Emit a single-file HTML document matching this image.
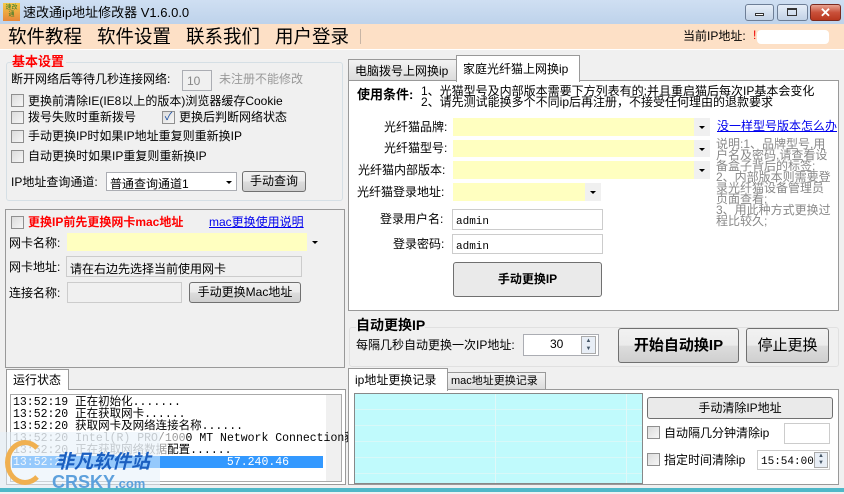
<!DOCTYPE html>
<html><head><meta charset="utf-8"><style>
*{margin:0;padding:0;box-sizing:border-box}
body{width:844px;height:492px;overflow:hidden;background:#f0f0f0;font-family:"Liberation Sans","Noto Sans CJK SC",sans-serif;font-size:12px;color:#000;position:relative}
.a{position:absolute;white-space:nowrap}
.t{position:absolute;white-space:nowrap;line-height:14px}
.box{position:absolute;border:1px solid #abadb3;background:#fff}
.btn{position:absolute;border:1px solid #707070;border-radius:3px;background:linear-gradient(#f2f2f2,#ebebeb 50%,#dddddd 51%,#cfcfcf);text-align:center;white-space:nowrap}
.cb{position:absolute;width:13px;height:13px;border:1px solid #8f8f8f;background:linear-gradient(135deg,#dcdcdc,#f6f6f6)}
.yel{position:absolute;background:#ffffc0}
.arr{position:absolute;background:#f0f0f0}
.arr:after{content:"";position:absolute;left:5px;top:8px;border-left:3px solid transparent;border-right:3px solid transparent;border-top:3px solid #000}
.grp{position:absolute;border:1px solid #d5dfe5;border-radius:3px}
.mono{font-family:"Liberation Mono","Noto Sans CJK SC",monospace}
</style></head><body>
<!-- title bar -->
<div class="a" style="left:0;top:0;width:844px;height:27px;background:linear-gradient(#cfdff2,#bcd1ea)"></div>
<div class="a" style="left:3px;top:3px;width:17px;height:18px;background:linear-gradient(#f4c94a,#e7873a);font-size:6px;color:#2a7a2a;line-height:7px;text-align:center;padding-top:2px">速改<br>通</div>
<div class="t" style="left:23px;top:6px;font-size:13px;">速改通ip地址修改器 V1.6.0.0</div>
<div class="a" style="left:745px;top:4px;width:29px;height:17px;border:1px solid #6d7e96;border-radius:3px;background:linear-gradient(#e6eef8,#c2d2e6)"></div>
<div class="a" style="left:755px;top:13px;width:9px;height:3px;border:1px solid #333;background:#fff"></div>
<div class="a" style="left:777px;top:4px;width:31px;height:17px;border:1px solid #6d7e96;border-radius:3px;background:linear-gradient(#e6eef8,#c2d2e6)"></div>
<div class="a" style="left:787px;top:8px;width:10px;height:8px;border:1px solid #333;border-top-width:2px"></div>
<div class="a" style="left:810px;top:4px;width:31px;height:17px;border:1px solid #7a2a20;border-radius:3px;background:linear-gradient(#e8a493,#c9503a 50%,#b8371f);color:#fff;font-weight:bold;font-size:13px;line-height:15px;text-align:center">✕</div>
<!-- menu bar -->
<div class="a" style="left:0;top:24px;width:844px;height:25px;background:#fde0c6"></div>
<div class="t" style="left:8px;top:26px;font-size:18.5px;line-height:21px">软件教程</div>
<div class="t" style="left:97px;top:26px;font-size:18.5px;line-height:21px">软件设置</div>
<div class="t" style="left:186px;top:26px;font-size:18.5px;line-height:21px">联系我们</div>
<div class="t" style="left:275px;top:26px;font-size:18.5px;line-height:21px">用户登录</div>
<div class="a" style="left:360px;top:29px;width:1px;height:15px;background:#c8b5a5"></div>
<div class="t" style="left:683px;top:29px;">当前IP地址:</div>
<div class="t" style="left:753px;top:28px;color:#e00">!</div>
<div class="a" style="left:757px;top:30px;width:72px;height:14px;background:#fff;border-radius:4px"></div>
<div class="a" style="left:0;top:49px;width:844px;height:1px;background:#fff"></div>
<!-- 基本设置 -->
<div class="grp" style="left:6px;top:62px;width:337px;height:139px"></div>
<div class="t" style="left:12px;top:55px;color:#f00;font-weight:bold;font-size:13px;background:#f0f0f0;padding-right:2px">基本设置</div>
<div class="t" style="left:11px;top:72px;">断开网络后等待几秒连接网络:</div>
<div class="box" style="left:182px;top:70px;width:30px;height:21px;background:#f0f0f0;color:#888;padding:3px 4px">10</div>
<div class="t" style="left:219px;top:72px;color:#999">未注册不能修改</div>
<div class="cb" style="left:11px;top:94px"></div><div class="t" style="left:28px;top:94px">更换前清除IE(IE8以上的版本)浏览器缓存Cookie</div>
<div class="cb" style="left:11px;top:111px"></div><div class="t" style="left:28px;top:110px">拨号失败时重新拨号</div>
<div class="cb" style="left:162px;top:111px;font-size:11px;line-height:11px;color:#1c4fa0;text-align:center">✓</div><div class="t" style="left:179px;top:110px">更换后判断网络状态</div>
<div class="cb" style="left:11px;top:130px"></div><div class="t" style="left:28px;top:129px">手动更换IP时如果IP地址重复则重新换IP</div>
<div class="cb" style="left:11px;top:150px"></div><div class="t" style="left:28px;top:149px">自动更换时如果IP重复则重新换IP</div>
<div class="t" style="left:11px;top:175px">IP地址查询通道:</div>
<div class="box" style="left:106px;top:172px;width:131px;height:19px;padding:2px 3px">普通查询通道1</div>
<div class="a" style="left:226px;top:181px;border-left:3px solid transparent;border-right:3px solid transparent;border-top:3px solid #000"></div>
<div class="btn" style="left:242px;top:171px;width:64px;height:21px;line-height:19px">手动查询</div>
<!-- mac group -->
<div class="a" style="left:5px;top:209px;width:340px;height:159px;border:1px solid #999"></div>
<div class="cb" style="left:11px;top:216px"></div>
<div class="t" style="left:28px;top:215px;color:#f00;font-weight:bold;">更换IP前先更换网卡mac地址</div>
<div class="t" style="left:209px;top:215px;color:#00e;text-decoration:underline">mac更换使用说明</div>
<div class="t" style="left:9px;top:236px">网卡名称:</div>
<div class="yel" style="left:67px;top:233px;width:240px;height:18px"></div>
<div class="arr" style="left:307px;top:233px;width:16px;height:18px"></div>
<div class="t" style="left:9px;top:260px">网卡地址:</div>
<div class="box" style="left:66px;top:256px;width:236px;height:21px;background:#f0f0f0;border-color:#ccc;padding:3px 3px">请在右边先选择当前使用网卡</div>
<div class="t" style="left:9px;top:286px">连接名称:</div>
<div class="box" style="left:67px;top:282px;width:115px;height:21px;background:#f0f0f0;border-color:#ccc"></div>
<div class="btn" style="left:189px;top:282px;width:112px;height:21px;line-height:19px">手动更换Mac地址</div>
<!-- 运行状态 -->
<div class="a" style="left:6px;top:389px;width:340px;height:96px;border:1px solid #999;background:#fff"></div>
<div class="a" style="left:6px;top:369px;width:63px;height:21px;border:1px solid #999;border-bottom:none;background:#fff"></div>
<div class="t" style="left:13px;top:373px">运行状态</div>
<div class="a" style="left:10px;top:394px;width:332px;height:88px;border:1px solid #aaa;background:#fff"></div>
<div class="a" style="left:326px;top:395px;width:15px;height:86px;background:#f0f0f0"></div>
<div class="a" style="left:12px;top:456px;width:311px;height:12px;background:#3399ff"></div>
<div class="mono" style="position:absolute;left:13px;top:397px;line-height:12px;font-size:11.5px;white-space:pre">13:52:19 正在初始化.......
13:52:20 正在获取网卡......
13:52:20 获取网卡及网络连接名称......
<span style="color:#999">13:52:20 Intel(R) PRO/100</span>0 MT Network Connection获取
<span style="color:#999">13:52:20 正在获取网络数据</span>配置......
<span style="color:#fff">13:52:20                       57.240.46</span></div>
<div class="a" style="left:0;top:432px;width:160px;height:60px;background:rgba(230,240,250,.55)"></div>
<div class="t" style="left:55px;top:452px;font-size:19px;line-height:22px;color:#1b5fc0;font-weight:bold;font-style:italic">非凡软件站</div>
<div class="t" style="left:52px;top:472px;font-size:18px;line-height:20px;color:#5da0dc;font-weight:bold">CRSKY<span style="font-size:13px">.com</span></div>
<div class="a" style="left:5px;top:440px;width:40px;height:45px;border:5px solid #f0b050;border-right-color:transparent;border-radius:50%"></div>
<!-- right tabs -->
<div class="a" style="left:348px;top:80px;width:491px;height:231px;border:1px solid #999;background:#fff"></div>
<div class="a" style="left:348px;top:59px;width:109px;height:22px;border:1px solid #999;background:linear-gradient(#f3f3f3,#dcdcdc)"></div>
<div class="t" style="left:355px;top:64px">电脑拨号上网换ip</div>
<div class="a" style="left:456px;top:55px;width:124px;height:27px;border:1px solid #999;border-bottom:none;background:#fff"></div>
<div class="t" style="left:463px;top:62px">家庭光纤猫上网换ip</div>
<div class="t" style="left:357px;top:88px;font-weight:bold;font-size:13px">使用条件:</div>
<div class="t" style="left:421px;top:86px;line-height:11px">1、光猫型号及内部版本需要下方列表有的;并且重启猫后每次IP基本会变化<br>2、请先测试能换多个不同ip后再注册，不接受任何理由的退款要求</div>
<div class="t" style="left:384px;top:120px">光纤猫品牌:</div>
<div class="yel" style="left:453px;top:118px;width:241px;height:18px"></div><div class="arr" style="left:694px;top:118px;width:16px;height:18px"></div>
<div class="t" style="left:384px;top:141px">光纤猫型号:</div>
<div class="yel" style="left:453px;top:140px;width:241px;height:17px"></div><div class="arr" style="left:694px;top:140px;width:16px;height:17px"></div>
<div class="t" style="left:358px;top:163px">光纤猫内部版本:</div>
<div class="yel" style="left:453px;top:161px;width:241px;height:18px"></div><div class="arr" style="left:694px;top:161px;width:16px;height:18px"></div>
<div class="t" style="left:357px;top:185px">光纤猫登录地址:</div>
<div class="yel" style="left:453px;top:183px;width:132px;height:18px"></div><div class="arr" style="left:585px;top:183px;width:16px;height:18px"></div>
<div class="t" style="left:717px;top:119px;color:#00e;text-decoration:underline">没一样型号版本怎么办</div>
<div class="a" style="left:716px;top:139px;width:118px;white-space:normal;line-height:11px;color:#888">说明:1、品牌型号,用户名及密码,请查看设备盒子背后的标签;<br>2、内部版本则需要登录光纤猫设备管理员页面查看;<br>3、用此种方式更换过程比较久;</div>
<div class="t" style="left:380px;top:212px">登录用户名:</div>
<div class="box" style="left:452px;top:209px;width:151px;height:21px;padding:3px 3px;border-color:#ccc" ><span class="mono" style="font-size:11px">admin</span></div>
<div class="t" style="left:393px;top:237px">登录密码:</div>
<div class="box" style="left:452px;top:234px;width:151px;height:20px;padding:3px 3px;border-color:#ccc"><span class="mono" style="font-size:11px">admin</span></div>
<div class="btn" style="left:453px;top:262px;width:149px;height:35px;line-height:33px;font-weight:bold;background:#eaeaea">手动更换IP</div>
<!-- auto change -->
<div class="grp" style="left:349px;top:327px;width:490px;height:40px;border-color:#e0e0e0"></div>
<div class="t" style="left:356px;top:317px;font-weight:bold;font-size:14px;line-height:16px;background:#f0f0f0">自动更换IP</div>
<div class="t" style="left:356px;top:338px">每隔几秒自动更换一次IP地址:</div>
<div class="box" style="left:523px;top:334px;width:76px;height:22px;padding:2px 0 0 26px;">30</div>
<div class="a" style="left:581px;top:336px;width:15px;height:18px;border:1px solid #aaa;background:#e8eef6;font-size:6px;line-height:8px;text-align:center;color:#456">▲<br>▼</div>
<div class="btn" style="left:618px;top:328px;width:121px;height:35px;line-height:33px;font-weight:bold;font-size:15px">开始自动换IP</div>
<div class="btn" style="left:746px;top:328px;width:83px;height:35px;line-height:33px;font-size:15px">停止更换</div>
<!-- records -->
<div class="a" style="left:348px;top:389px;width:491px;height:96px;border:1px solid #999;background:#fff"></div>
<div class="a" style="left:447px;top:372px;width:99px;height:18px;border:1px solid #999;background:linear-gradient(#f3f3f3,#dcdcdc)"></div>
<div class="t" style="left:451px;top:374px;font-size:11px">mac地址更换记录</div>
<div class="a" style="left:348px;top:368px;width:100px;height:23px;border:1px solid #999;border-bottom:none;background:#fff"></div>
<div class="t" style="left:355px;top:373px">ip地址更换记录</div>
<div class="a" style="left:354px;top:393px;width:289px;height:91px;border:1px solid #888;background:repeating-linear-gradient(#c0fafc 0 15px,#d8f8f8 15px 16px)"></div>
<div class="a" style="left:495px;top:394px;width:1px;height:89px;background:#e0f8f8"></div>
<div class="a" style="left:626px;top:394px;width:1px;height:89px;background:#e0f8f8"></div>
<div class="btn" style="left:647px;top:397px;width:186px;height:22px;line-height:20px;background:#eaeaea">手动清除IP地址</div>
<div class="cb" style="left:647px;top:426px"></div><div class="t" style="left:664px;top:426px">自动隔几分钟清除ip</div>
<div class="box" style="left:784px;top:423px;width:46px;height:21px;border-color:#ccc"></div>
<div class="cb" style="left:647px;top:453px"></div><div class="t" style="left:664px;top:453px">指定时间清除ip</div>
<div class="box" style="left:757px;top:450px;width:73px;height:20px;border-color:#ccc;padding:2px 3px"><span class="mono" style="font-size:11px">15:54:00</span></div>
<div class="a" style="left:814px;top:452px;width:14px;height:16px;border:1px solid #aaa;background:#e8eef6;font-size:6px;line-height:7px;text-align:center;color:#456">▲<br>▼</div>
<div class="a" style="left:0;top:488px;width:844px;height:4px;background:#4fb8c8"></div>
</body></html>
